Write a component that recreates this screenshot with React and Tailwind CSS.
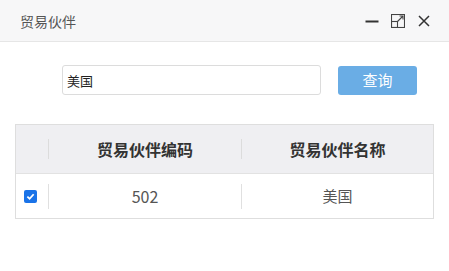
export default function App() {
  const font = { fontFamily: '"Noto Sans CJK SC", "Noto Sans", sans-serif' };
  return (
    <div className="w-[449px] h-[271px] bg-white text-[#555]" style={font}>
      {/* 标题栏 */}
      <div className="h-[42px] bg-[#f7f7f8] border-b border-[#e6e6e6] flex items-center pl-5 pr-[18px]">
        <span className="text-[14px] text-[#555] leading-none">贸易伙伴</span>
        <div className="ml-auto flex items-center gap-[12px] text-[#333]">
          <svg width="14" height="14" viewBox="0 0 14 14">
            <path d="M0.5 7.5H13.5" stroke="currentColor" strokeWidth="2" />
          </svg>
          <svg width="14" height="14" viewBox="0 0 14 14" fill="none" stroke="#444" strokeWidth="1.1">
            <rect x="0.5" y="0.5" width="13" height="13" />
            <rect x="0.5" y="7.5" width="6" height="6" />
            <path d="M6.5 7.5L12 2M8.5 2H12V5.5" />
          </svg>
          <svg width="14" height="14" viewBox="0 0 14 14" fill="none" stroke="currentColor" strokeWidth="1.5">
            <path d="M2 2L12 12M12 2L2 12" />
          </svg>
        </div>
      </div>

      {/* 查询 */}
      <div className="flex items-center mt-[23px] pl-[62px]">
        <input
          defaultValue="美国"
          className="w-[259px] h-[30px] border border-[#dcdcdc] rounded-[3px] px-1 text-[13px] text-[#222] outline-none"
          style={font}
        />
        <button className="ml-[17px] w-[79px] h-[29px] rounded-[3px] bg-[#6aade5] text-white text-[15px]">
          查询
        </button>
      </div>

      {/* 表格 */}
      <div className="mx-[15px] mt-[29px] border border-[#dedede]">
        <div className="flex h-[49px] bg-[#efeff2] border-b border-[#e2e2e2] items-center">
          <div className="w-[33px] h-[20px] border-r border-[#dcdcdc]" />
          <div className="w-[193px] h-[20px] border-r border-[#dcdcdc] flex items-center justify-center text-[16px] font-bold text-[#333]">
            贸易伙伴编码
          </div>
          <div className="flex-1 flex items-center justify-center text-[16px] font-bold text-[#333]">
            贸易伙伴名称
          </div>
        </div>
        <div className="flex h-[44px] items-center bg-white">
          <div className="w-[33px] h-[25px] border-r border-[#e0e0e0] flex items-center pl-[8px]">
            <div className="w-[13px] h-[13px] rounded-[2px] bg-[#1a73e8] flex items-center justify-center">
              <svg width="9" height="9" viewBox="0 0 10 10" fill="none" stroke="white" strokeWidth="2">
                <path d="M1.5 5.2L4 7.5L8.5 2.5" />
              </svg>
            </div>
          </div>
          <div className="w-[193px] h-[25px] border-r border-[#e0e0e0] flex items-center justify-center text-[16px] text-[#555]">
            502
          </div>
          <div className="flex-1 flex items-center justify-center text-[15px] text-[#555]">
            美国
          </div>
        </div>
      </div>
    </div>
  );
}
